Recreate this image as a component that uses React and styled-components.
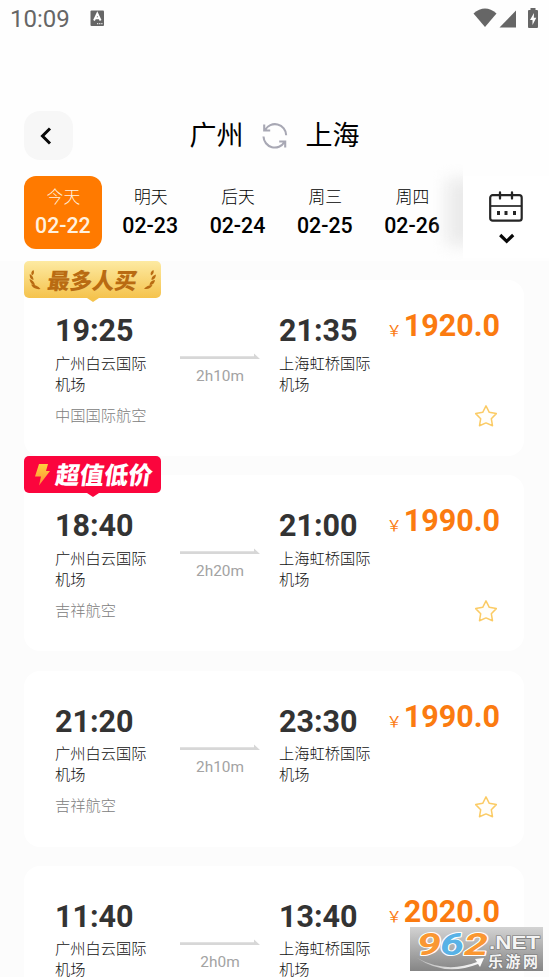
import React from "react";
import styled, { createGlobalStyle } from "styled-components";

const GlobalStyle = createGlobalStyle`
  * { box-sizing: border-box; }
  html, body { margin: 0; padding: 0; }
  body {
    overflow: hidden;
    background: #fcfcfc;
    font-family: Roboto, "Noto Sans CJK SC", sans-serif;
  }
  button { border: 0; padding: 0; margin: 0; background: none; font: inherit; }
`;

const Screen = styled.div`
  width: 549px;
  height: 977px;
  overflow: hidden;
  position: relative;
`;

const Header = styled.header`
  height: 261px;
  background: #fefefe;
`;

const StatusBar = styled.div`
  height: 38px;
  padding: 0 10px 0 10px;
  display: flex;
  align-items: center;
  color: #666;
`;

const Clock = styled.span`
  font-size: 24px;
  line-height: 38px;
  width: 80px;
`;

const KeyboardSlot = styled.span`
  display: flex;
  margin-bottom: 2px;
`;

const StatusIcons = styled.div`
  margin-left: auto;
  display: flex;
  align-items: center;
  height: 36px;
  margin-bottom: 2px;
`;

const SignalSlot = styled.span`
  display: flex;
  margin: 2px 10px 0 2px;
`;

const TitleRow = styled.div`
  margin-top: 73px;
  height: 49px;
  padding-left: 24px;
  display: grid;
  grid-template-columns: 49px 1fr 73px;
`;

const BackButton = styled.button`
  width: 49px;
  height: 49px;
  border-radius: 16px;
  background: #f7f7f7;
  display: flex;
  align-items: center;
  justify-content: center;
  padding-right: 6px;
`;

const Route = styled.div`
  display: flex;
  align-items: center;
  justify-content: center;
  gap: 18px;
  height: 50px;
  font-size: 27px;
  line-height: 50px;
  color: #000;
`;

const DateStrip = styled.nav`
  margin-top: 16px;
  height: 85px;
  padding-left: 24.4px;
  display: flex;
  gap: 9.3px;
`;

const DateTab = styled.button`
  flex: none;
  width: 78px;
  height: 73px;
  border-radius: 12px;
  padding-top: 9px;
  display: flex;
  flex-direction: column;
  align-items: center;
  background: ${(p) => (p.$active ? "#ff7a00" : "transparent")};
  color: ${(p) => (p.$active ? "#fff1df" : "#000")};
`;

const DayName = styled.span`
  font-size: 16.8px;
  line-height: 24px;
  font-weight: 300;
`;

const DayDate = styled.span`
  font-size: 21.3px;
  line-height: 24px;
  margin-top: 5px;
  margin-left: -1px;
  font-weight: 500;
`;

const StripEnd = styled.div`
  flex: none;
  position: relative;
  display: flex;
  width: 86px;
  height: 82px;
  margin-left: 2.5px;
`;

const StripShade = styled.span`
  position: absolute;
  right: 100%;
  top: -12px;
  width: 40px;
  height: 96px;
  overflow: hidden;

  &::before {
    content: "";
    position: absolute;
    left: 23px;
    top: 15px;
    width: 40px;
    height: 66px;
    background: rgba(230, 230, 230, 0.8);
    filter: blur(8px);
  }
`;

const CalendarPanel = styled.button`
  width: 86px;
  height: 82px;
  background: #fff;
  display: flex;
  flex-direction: column;
  align-items: center;
  padding: 15px 0 0 0;
  gap: 11px;
`;

const FlightList = styled.main`
  padding: 19px 25px 0 24px;
  display: flex;
  flex-direction: column;
  gap: 19.3px;
`;

const Card = styled.article`
  position: relative;
  flex: none;
  height: 176px;
  border-radius: 16px;
  background: #fff;
  padding: 35px 24px 0 31px;
  display: grid;
  grid-template-columns: 125px 80px 19px 100px 1fr;
`;

const Stop = styled.section`
  display: flex;
  flex-direction: column;
`;

const Time = styled.strong`
  font-size: 30.5px;
  line-height: 32px;
  font-weight: 700;
  color: #333;
`;

const Airport = styled.span`
  margin-top: 6.5px;
  width: 94px;
  font-size: 15.25px;
  line-height: 21px;
  font-weight: 300;
  color: #111;
`;

const Airline = styled.span`
  margin-top: 9px;
  font-size: 15.25px;
  line-height: 22px;
  font-weight: 300;
  color: #808080;
`;

const Leg = styled.div`
  padding-top: 38px;
  display: flex;
  flex-direction: column;
  align-items: center;
  svg { flex: none; }
`;

const Duration = styled.span`
  margin-top: 5px;
  font-size: 15.4px;
  line-height: 20px;
  color: #a3a3a3;
`;

const Fare = styled.div`
  grid-column: 5;
  display: flex;
  flex-direction: column;
  align-items: flex-end;
`;

const Price = styled.div`
  display: flex;
  align-items: baseline;
  justify-content: flex-end;
  gap: 2px;
  height: 32px;
  margin-top: -5px;
  line-height: 32px;
  white-space: nowrap;
  font-size: 30.5px;
  font-weight: 700;
  color: #fb7b10;
`;

const CurrencyMark = styled.span`
  font-family: "Noto Sans CJK SC", sans-serif;
  font-size: 15.25px;
  line-height: 20px;
  font-weight: 400;
`;

const StarButton = styled.button`
  margin-top: 62px;
  margin-right: 2px;
  width: 24px;
  height: 24px;
  display: flex;
`;

const Ribbon = styled.div`
  position: absolute;
  left: 0.4px;
  top: -19px;
  width: 137px;
  height: 37px;
  border-radius: 5px;
  display: flex;
  align-items: center;
  justify-content: center;
  gap: ${(p) => (p.$hot ? 5 : 7)}px;
  background: ${(p) => (p.$hot ? "#fb053d" : "linear-gradient(180deg, #fdeaa2, #f5c34d)")};

  &::after {
    content: "";
    position: absolute;
    left: 63px;
    top: 37px;
    border: 6px solid transparent;
    border-top: 4px solid ${(p) => (p.$hot ? "#fb053d" : "#f5c34d")};
    border-bottom: 0;
  }
`;

const RibbonText = styled.span`
  font-family: "Noto Sans CJK SC", sans-serif;
  font-size: ${(p) => (p.$hot ? 24.2 : 22.3)}px;
  line-height: 36px;
  font-weight: 900;
  transform: translateY(-1px) skewX(-8deg);
  color: ${(p) => (p.$hot ? "#fff" : "#b96b12")};
`;

const Watermark = styled.aside`
  position: absolute;
  left: 410px;
  top: 927px;
  width: 133px;
  height: 44px;
  background: linear-gradient(180deg, #d3d3d3, #858585);
`;

const WifiIcon = () => (
  <svg width="24" height="20" viewBox="0 0 24 20">
    <path d="M.5 5.500Q12-4.500 23.500 5.500L12 19Z" fill="#666" />
  </svg>
);

const SignalIcon = () => (
  <svg width="18" height="18" viewBox="0 0 18 18">
    <path d="M17 .5V17.500H.5Z" fill="#666" />
  </svg>
);

const BatteryIcon = () => (
  <svg width="12" height="21" viewBox="0 0 12 21">
    <path d="M3.500 0h5v2H10q1 0 1 1v16q0 1-1 1H2q-1 0-1-1V3q0-1 1-1h1.500Z" fill="#666" />
    <path d="M7 5 3 12h2.500v5L9.300 9.800H6.800Z" fill="#fff" />
  </svg>
);

const KeyboardIcon = () => (
  <svg width="15" height="17" viewBox="0 0 15 17">
    <rect x=".5" y=".5" width="13.500" height="15.500" rx="1" fill="#666" />
    <path d="m4 10.500 3.300-7 3.300 7M5.300 8.300h4" fill="none" stroke="#fff" strokeWidth="1.900" />
    <path d="M7 13.700h6" stroke="#ddd" strokeWidth="1.200" strokeDasharray="1.300 .8" />
  </svg>
);

const BackIcon = () => (
  <svg width="14" height="18" viewBox="0 0 14 18">
    <path d="M11 1.500 3.500 9l7.500 7.500" fill="none" stroke="#080808" strokeWidth="3" />
  </svg>
);

const SwapIcon = () => (
  <svg width="26" height="26" viewBox="0 0 26 26" fill="none" stroke="#a8a8b4" strokeWidth="2.100">
    <path d="M2.200 1.500v6h6M3 7A11.300 11.300 0 0 1 24.200 12.200" />
    <path d="M23.200 24.500v-6h-6M22.500 19A11.300 11.300 0 0 1 1.500 13.500" />
  </svg>
);

const CalendarIcon = () => (
  <svg width="34" height="31" viewBox="0 0 34 31" fill="none" stroke="#252525">
    <rect x="1.200" y="4.200" width="31.500" height="25.500" rx="2.500" strokeWidth="2.200" />
    <path d="M1 15h32" strokeWidth="1.700" />
    <path d="M11 1.500v6M23 1.500v6" strokeWidth="2.300" strokeLinecap="round" />
    <path d="M9.500 20v4M17 20v4M25.500 20v4" strokeWidth="3" />
  </svg>
);

const DownIcon = () => (
  <svg width="18" height="12" viewBox="0 0 18 12">
    <path d="m3.200 2 6.500 6.300L16.200 2" fill="none" stroke="#080808" strokeWidth="3.200" />
  </svg>
);

const ArrowLine = () => (
  <svg width="80" height="8" viewBox="0 0 80 8">
    <path d="M0 3.300h74V.5l6 5.500H0Z" fill="#d7d7d7" />
  </svg>
);

const StarIcon = () => (
  <svg width="24" height="24" viewBox="0 0 24 24">
    <path
      d="m12 1.800 3.300 6.500 7 1.300-5 5.100 1.200 7L12 18.900l-6.500 2.800 1.200-7-5-5.100 7-1.300Z"
      fill="#fffefa"
      stroke="#fbcb65"
      strokeWidth="1.500"
      strokeLinejoin="round"
    />
  </svg>
);

const LeftLaurel = () => (
  <svg width="12" height="21" viewBox="0 0 12 21" fill="#b96b12">
    <path d="M4.500 1Q1 3 3 6.500 6 4.500 4.500 1ZM.8 5q-.8 5 3.700 6Q4.500 7 .8 5ZM.5 10q.5 5.500 5.500 6Q5 11.500.5 10ZM2 15.500q3 5.500 9.500 4.500Q8 15.500 2 15.500Z" />
  </svg>
);

const RightLaurel = () => (
  <svg width="12" height="21" viewBox="0 0 12 21" fill="#b96b12">
    <path d="M9.500 1Q5.500 3 7 6.500 10.500 4.500 9.500 1ZM12 5.500Q7 7 7.500 11 11.500 10.500 12 5.500ZM11 11q-5 .5-5.500 5Q10.500 16 11 11ZM8.500 16Q3 16 0 19.800 6 21 8.500 16Z" />
  </svg>
);

const BoltIcon = () => (
  <svg width="17" height="23" viewBox="0 0 17 23">
    <defs>
      <linearGradient id="bolt" x1="0" y1="0" x2="0" y2="1">
        <stop offset="0" stopColor="#ffd13d" />
        <stop offset="1" stopColor="#ff8a38" />
      </linearGradient>
    </defs>
    <path d="M5 1h9l-2 7h4L5 22.500 7 13.500H1Z" fill="url(#bolt)" />
  </svg>
);

const WatermarkArt = () => (
  <svg width="133" height="44" viewBox="0 0 133 44">
    <defs>
      <linearGradient id="swoosh">
        <stop offset="0" stopColor="#fff" stopOpacity=".4" />
        <stop offset="1" stopColor="#fff" />
      </linearGradient>
    </defs>
    <g
      fontFamily="Roboto"
      fontWeight="700"
      fontStyle="italic"
      fontSize="32"
      stroke="#fff"
      strokeWidth="2"
      paintOrder="stroke"
      strokeLinejoin="round"
    >
      <text x="7" y="27.500" textLength="24" lengthAdjust="spacingAndGlyphs" fill="#fa9732">9</text>
      <text x="30" y="27.500" textLength="24" lengthAdjust="spacingAndGlyphs" fill="#58b2e6">6</text>
      <text x="54" y="27.500" textLength="24" lengthAdjust="spacingAndGlyphs" fill="#fa9732">2</text>
    </g>
    <path d="M7 31q29 16 60 4l-2-3 9-1-4 9-2-3Q35 50 7 31Z" fill="url(#swoosh)" />
    <g fill="#f4f4f4" stroke="#777" strokeWidth="1.200" paintOrder="stroke" fontWeight="700">
      <text x="79" y="21.500" fontFamily="Liberation Sans" fontSize="18" textLength="51" lengthAdjust="spacingAndGlyphs">.NET</text>
      <text x="78" y="39.500" fontFamily="Noto Sans CJK SC" fontSize="15" textLength="50" lengthAdjust="spacing">乐游网</text>
    </g>
  </svg>
);

const days = [
  ["今天", "02-22"],
  ["明天", "02-23"],
  ["后天", "02-24"],
  ["周三", "02-25"],
  ["周四", "02-26"],
];

const flights = [
  { dep: "19:25", arr: "21:35", span: "2h10m", airline: "中国国际航空", price: "1920.0", tag: "popular" },
  { dep: "18:40", arr: "21:00", span: "2h20m", airline: "吉祥航空", price: "1990.0", tag: "hot" },
  { dep: "21:20", arr: "23:30", span: "2h10m", airline: "吉祥航空", price: "1990.0" },
  { dep: "11:40", arr: "13:40", span: "2h0m", airline: "", price: "2020.0" },
];

function FlightCard({ flight }) {
  return (
    <Card>
      <Stop>
        <Time>{flight.dep}</Time>
        <Airport>广州白云国际机场</Airport>
        {flight.airline && <Airline>{flight.airline}</Airline>}
      </Stop>
      <Leg>
        <ArrowLine />
        <Duration>{flight.span}</Duration>
      </Leg>
      <span />
      <Stop>
        <Time>{flight.arr}</Time>
        <Airport>上海虹桥国际机场</Airport>
      </Stop>
      <Fare>
        <Price>
          <CurrencyMark>￥</CurrencyMark>
          {flight.price}
        </Price>
        <StarButton aria-label="收藏">
          <StarIcon />
        </StarButton>
      </Fare>
      {flight.tag === "popular" && (
        <Ribbon>
          <LeftLaurel />
          <RibbonText>最多人买</RibbonText>
          <RightLaurel />
        </Ribbon>
      )}
      {flight.tag === "hot" && (
        <Ribbon $hot>
          <BoltIcon />
          <RibbonText $hot>超值低价</RibbonText>
        </Ribbon>
      )}
    </Card>
  );
}

export default function App() {
  return (
    <Screen>
      <GlobalStyle />
      <Header>
        <StatusBar>
          <Clock>10:09</Clock>
          <KeyboardSlot>
            <KeyboardIcon />
          </KeyboardSlot>
          <StatusIcons>
            <WifiIcon />
            <SignalSlot>
              <SignalIcon />
            </SignalSlot>
            <BatteryIcon />
          </StatusIcons>
        </StatusBar>
        <TitleRow>
          <BackButton aria-label="返回">
            <BackIcon />
          </BackButton>
          <Route>
            <span>广州</span>
            <SwapIcon />
            <span>上海</span>
          </Route>
        </TitleRow>
        <DateStrip>
          {days.map(([name, date], i) => (
            <DateTab key={date} $active={i === 0}>
              <DayName>{name}</DayName>
              <DayDate>{date}</DayDate>
            </DateTab>
          ))}
          <StripEnd>
            <StripShade />
            <CalendarPanel aria-label="日历">
              <CalendarIcon />
              <DownIcon />
            </CalendarPanel>
          </StripEnd>
        </DateStrip>
      </Header>
      <FlightList>
        {flights.map((f) => (
          <FlightCard key={f.dep} flight={f} />
        ))}
      </FlightList>
      <Watermark>
        <WatermarkArt />
      </Watermark>
    </Screen>
  );
}
